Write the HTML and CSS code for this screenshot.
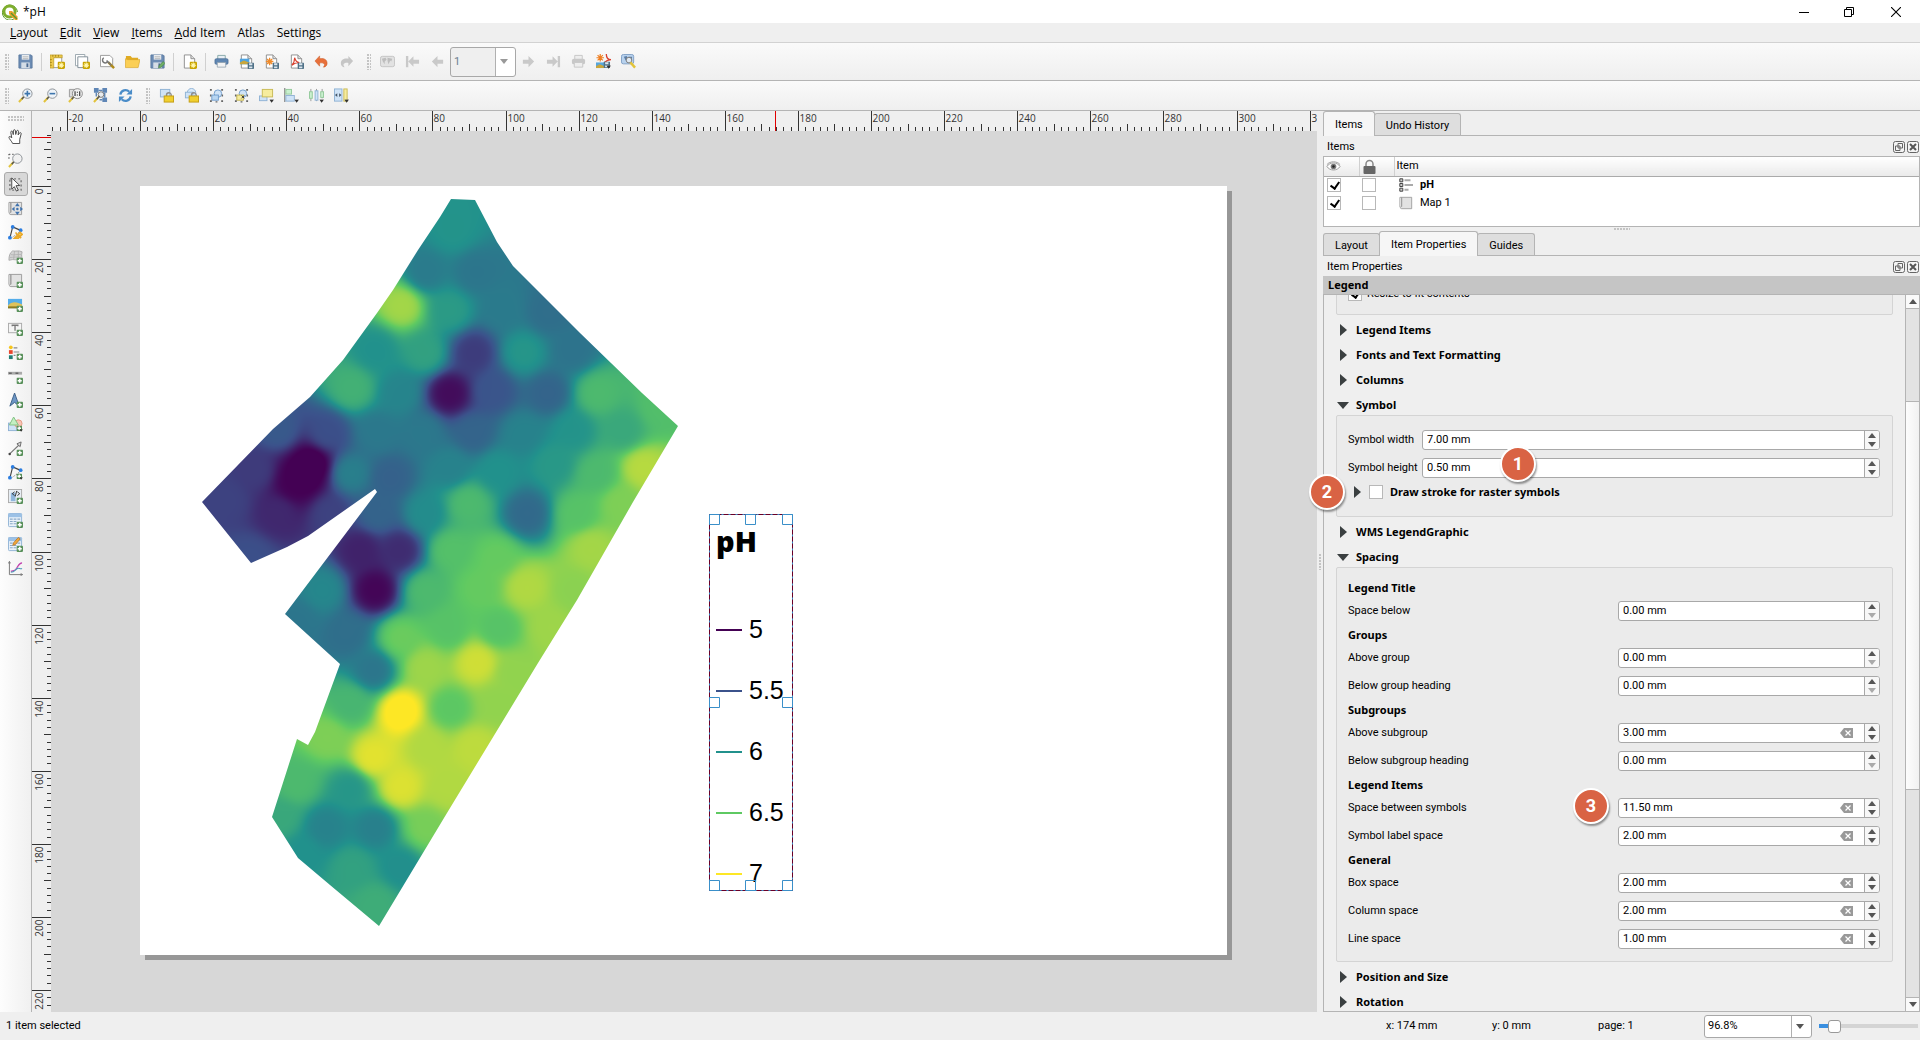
FILE: index.html
```
<!DOCTYPE html>
<html lang="en">
<head>
<meta charset="utf-8">
<title>*pH</title>
<link rel="stylesheet" href="styles.css">
</head>
<body>
<svg class="defs" aria-hidden="true">
  <symbol id="b-new" viewBox="0 0 8 8"><rect width="8" height="8" rx="1.5" fill="#c9a400"/><path d="M4 1v6M1 4h6M2 2l4 4M6 2l-4 4" stroke="#fff6b0" stroke-width="1.1"/></symbol>
  <symbol id="b-add" viewBox="0 0 8 8"><rect width="8" height="8" rx="1.5" fill="#58905a"/><path d="M4 1.5v5M1.500 4h5" stroke="#fff" stroke-width="2"/></symbol>
  <symbol id="b-save" viewBox="0 0 8 8"><rect width="8" height="8" rx="1" fill="#4f7187"/><path d="M2 1h4v2.500H2zM2 5h4v2H2z" fill="#dce6ee"/></symbol>
  <symbol id="arr" viewBox="0 0 6 4"><path d="M0 0h6L3 4z" fill="#333"/></symbol>
  <symbol id="i-save" viewBox="0 0 16 16"><path d="M1 1h13l1 1v13H1z" fill="#6c8cb4" stroke="#5b7aa0"/><rect x="4" y="1" width="8" height="5" fill="#e9ecef"/><path d="M5 3h6M5 5h6" stroke="#aaa" stroke-width=".8"/><rect x="3.500" y="9" width="9" height="6" fill="#d5dde6"/><rect x="9" y="10" width="2" height="4" fill="#4b6a92"/></symbol>
  <symbol id="page" viewBox="0 0 16 16"><path d="M2.500 1h7l4 4v10h-11z" fill="#fff" stroke="#8e8e8e"/><path d="M9.500 1v4h4" fill="#ddd" stroke="#8e8e8e"/></symbol>
  <symbol id="i-new" viewBox="0 0 16 16"><path d="M2.500 3.500h10v11h-10z" fill="#fff" stroke="#999"/><path d="M0 1h13v3H4v11H0z" fill="#ecc94b" stroke="#b99722" stroke-width=".7"/><path d="M3 1v2M6 1v2M9 1v2M0 6h2M0 9h2M0 12h2" stroke="#9a7b12" stroke-width=".8"/><use href="#b-new" x="8" y="8" width="8" height="8"/></symbol>
  <symbol id="i-dup" viewBox="0 0 16 16"><path d="M.5.5h10v12H.5z" fill="#fff" stroke="#98a4ac"/><path d="M3 3h10.500v11.500H3z" fill="#fff" stroke="#7f8c95"/><use href="#b-new" x="8" y="8" width="8" height="8"/></symbol>
  <symbol id="i-mgr" viewBox="0 0 16 16"><path d="M.5 1.500h10l3 3v9H.5z" fill="#fff" stroke="#9a9a9a"/><path d="M4 4a3 3 0 1 0 4.500 3.500" fill="none" stroke="#777" stroke-width="1.600"/><path d="M9 9l6 6" stroke="#b08b1a" stroke-width="2.600"/><path d="M7 7l5 5" stroke="#777" stroke-width="1.500"/></symbol>
  <symbol id="i-open" viewBox="0 0 16 16"><path d="M1 2h5l1.500 2H14v3H1z" fill="#e0ab22"/><path d="M3 6h13l-2 8.500H.5V5z" fill="#fbcf55" stroke="#d9a526" stroke-width=".7"/></symbol>
  <symbol id="i-saveas" viewBox="0 0 16 16"><use href="#i-save"/><path d="M9 15l1-3 4-4 2 2-4 4z" fill="#6fae66" stroke="#3f7b3a" stroke-width=".6"/></symbol>
  <symbol id="i-addpage" viewBox="0 0 16 16"><use href="#page"/><use href="#b-new" x="8" y="8" width="8" height="8"/></symbol>
  <symbol id="i-print" viewBox="0 0 16 16"><path d="M4 1.500h8V6H4z" fill="#e8eef4" stroke="#8aa"/><rect x="1" y="5" width="14" height="6" rx="1.500" fill="#5f86b2" stroke="#44688f" stroke-width=".7"/><path d="M3.500 9h9v5h-9z" fill="#f3f3f3" stroke="#8a99a8" stroke-width=".8"/></symbol>
  <symbol id="i-img" viewBox="0 0 16 16"><use href="#page"/><path d="M1 5h10v6H1z" fill="#4fa4e0"/><path d="M1 9l4-2 6 2v2H1z" fill="#c9a63b"/><use href="#b-save" x="9" y="9" width="7" height="7"/></symbol>
  <symbol id="i-svg" viewBox="0 0 16 16"><use href="#page"/><path d="M6 4v8M2 8h8M3.300 5.300l5.400 5.400M8.700 5.300l-5.400 5.400" stroke="#ef8b2c" stroke-width="1.400"/><use href="#b-save" x="9" y="9" width="7" height="7"/></symbol>
  <symbol id="i-pdf" viewBox="0 0 16 16"><use href="#page"/><path d="M6 4c1 4 3 5 5 5-4 0-6 1-8 3 2-2 3-4 3-8z" fill="none" stroke="#d9412f" stroke-width="1.200"/><use href="#b-save" x="9" y="9" width="7" height="7"/></symbol>
  <symbol id="i-undo" viewBox="0 0 16 16"><path d="M6 2v3c6-1 8 2 8 5 0 2-1.500 4-4 4 2-2 2-5-4-4.500V13L1 7.500z" fill="#e8703a" stroke="#c85420" stroke-width=".5"/></symbol>
  <symbol id="i-redo" viewBox="0 0 16 16"><path d="M10 2v3c-6-1-8 2-8 5 0 2 1.500 4 4 4-2-2-2-5 4-4.500V13l5-5.500z" fill="#c6c6c6"/></symbol>
  <symbol id="i-atlas" viewBox="0 0 16 16"><rect x=".5" y="2.500" width="15" height="11" rx="2" fill="#e2e2e2" stroke="#c4c4c4"/><path d="M2 5l4-1 1 2-2 2v3L3 8zM8 4l5 1-1 3-1-1-2 4-1-4z" fill="#bdbdbd"/></symbol>
  <symbol id="i-first" viewBox="0 0 16 16"><path d="M1 2h2.500v12H1zM3.500 8L9 2.500V6h6v4.500H9v3z" fill="#c9c9c9"/></symbol>
  <symbol id="i-prev" viewBox="0 0 16 16"><path d="M2 8l6-6v4h6v4.500H8V14z" fill="#c9c9c9"/></symbol>
  <symbol id="i-next" viewBox="0 0 16 16"><path d="M14 8L8 2v4H2v4.500h6V14z" fill="#c9c9c9"/></symbol>
  <symbol id="i-last" viewBox="0 0 16 16"><path d="M12.500 2H15v12h-2.500zM12.500 8L7 2.500V6H1v4.500h6v3z" fill="#c9c9c9"/></symbol>
  <symbol id="i-printoff" viewBox="0 0 16 16"><path d="M4 1.500h8V6H4z" fill="#eee" stroke="#c6c6c6"/><rect x="1" y="5" width="14" height="6" rx="2" fill="#c8c8c8"/><path d="M3.500 9h9v5h-9z" fill="#eee" stroke="#c6c6c6"/></symbol>
  <symbol id="i-export" viewBox="0 0 16 16"><path d="M4.500 0v8M.5 4h8M1.700 1.200l5.600 5.600M7.300 1.200L1.700 6.800" stroke="#ef7f22" stroke-width="1.300"/><path d="M11 0c0 4 2 6 5 6-4 0-5 1-7 3" fill="none" stroke="#d9412f" stroke-width="1.400"/><path d="M0 9h9v6H0z" fill="#57a6dc"/><path d="M0 13l4-2 5 2v2H0z" fill="#c9a63b"/><use href="#b-save" x="8" y="8" width="7" height="7"/><use href="#arr" x="11" y="12" width="5" height="4"/></symbol>
  <symbol id="i-aset" viewBox="0 0 16 16"><rect x=".5" y=".5" width="13" height="10" rx="2" fill="#b8d2ee" stroke="#7f9fc4"/><path d="M3 3l3-1 1 2-2 3zM8 3h4l-1 4z" fill="#5c7ea6"/><circle cx="8.500" cy="6.500" r="3" fill="#dfe9f3" stroke="#777"/><path d="M10 9l5 5.500" stroke="#e3c43a" stroke-width="2.600"/></symbol>
  <symbol id="mag" viewBox="0 0 16 16"><path d="M6 9.500L1 15" stroke="#e2c33c" stroke-width="2.200"/><path d="M7 8.500L4 12" stroke="#555" stroke-width="1.500"/></symbol>
  <symbol id="i-zin" viewBox="0 0 16 16"><use href="#mag"/><circle cx="10" cy="6" r="5" fill="#eef3f8" stroke="#8a8f94"/><path d="M10 3v6M7 6h6" stroke="#3d75ad" stroke-width="1.700"/></symbol>
  <symbol id="i-zout" viewBox="0 0 16 16"><use href="#mag"/><circle cx="10" cy="6" r="5" fill="#eef3f8" stroke="#8a8f94"/><path d="M7 6h6" stroke="#3d75ad" stroke-width="1.700"/></symbol>
  <symbol id="i-z1" viewBox="0 0 16 16"><path d="M1.500 1.500h7v8h-7z" fill="#ddd" stroke="#999"/><use href="#mag"/><circle cx="10" cy="6" r="5.300" fill="#f2f2f2" stroke="#888"/><path d="M7.500 3.500v5M12.500 3.500v5M10 4v1M10 7v1" stroke="#333" stroke-width="1.200"/></symbol>
  <symbol id="i-zfull" viewBox="0 0 16 16"><path d="M1 0h5v5H1zM10 0h5v5h-5zM10 10h5v5h-5z" fill="#5f86b6"/><path d="M3.500 5v4M6 2.500h4M12.500 5v5M7 12.500h3" stroke="#5f86b6" stroke-width="1.500"/><circle cx="8.500" cy="7" r="3" fill="#e8ecf0" stroke="#777"/><use href="#mag"/></symbol>
  <symbol id="i-ref" viewBox="0 0 16 16"><path d="M2.500 7A5.500 5.500 0 0 1 12 4M13.500 9A5.500 5.500 0 0 1 4 12" fill="none" stroke="#4a8cc8" stroke-width="2.400"/><path d="M15 1v6H9zM1 15V9h6z" fill="#4a8cc8"/></symbol>
  <symbol id="lockb" viewBox="0 0 16 16"><path d="M8 9V7.500a2.500 2.500 0 0 1 5 0V9" fill="none" stroke="#8d8d8d" stroke-width="1.500"/><rect x="5.500" y="8.500" width="10" height="6.500" fill="#f0cf2e" stroke="#c39c14"/></symbol>
  <symbol id="i-lock" viewBox="0 0 16 16"><rect x="1.500" y="1.500" width="10" height="8" fill="#cfe3f7" stroke="#8fb2d4"/><use href="#lockb"/></symbol>
  <symbol id="i-unlock" viewBox="0 0 16 16"><circle cx="8" cy="5" r="4.500" fill="#d9eafa" stroke="#8fb2d4"/><rect x="1.500" y="4.500" width="8" height="6" fill="#cfe3f7" stroke="#8fb2d4"/><use href="#lockb"/></symbol>
  <symbol id="dots" viewBox="0 0 16 16"><path d="M1 1h2v2H1zM13 1h2v2h-2zM1 13h2v2H1zM13 13h2v2h-2zM1 7h1.500v2H1zM13.500 7H15v2h-1.500zM7 14h2v1.500H7z" fill="#666"/></symbol>
  <symbol id="i-grp" viewBox="0 0 16 16"><circle cx="9.500" cy="6" r="4" fill="#cfe3f7" stroke="#6f9ccb"/><rect x="3" y="7.500" width="7" height="5.500" fill="#b8d6f2" stroke="#6f9ccb"/><use href="#dots"/></symbol>
  <symbol id="i-ungrp" viewBox="0 0 16 16"><circle cx="9.500" cy="6" r="4" fill="#cfe3f7" stroke="#6f9ccb"/><rect x="3" y="7.500" width="7" height="5.500" fill="#f6ec9e" stroke="#c0b04a"/><path d="M8 8l3 3M11 8l-3 3" stroke="#333"/><use href="#dots"/></symbol>
  <symbol id="i-raise" viewBox="0 0 16 16"><rect x=".5" y="8.500" width="8" height="5" fill="#cfe3f7" stroke="#8fb2d4"/><rect x="3.500" y="1.500" width="11" height="8" fill="#f6ec9e" stroke="#c9ba55"/><use href="#arr" x="11" y="12" width="5" height="4"/></symbol>
  <symbol id="i-align" viewBox="0 0 16 16"><path d="M.8 0v15" stroke="#888" stroke-width="1.300"/><rect x="2" y="1.500" width="6" height="5" fill="#c9f0cf" stroke="#93c99b"/><rect x="2" y="8" width="9" height="6" fill="#cfe3f7" stroke="#8fb2d4"/><use href="#arr" x="11" y="12" width="5" height="4"/></symbol>
  <symbol id="i-dist" viewBox="0 0 16 16"><path d="M2 1v13M8 1v13M14 1v10" stroke="#999"/><rect x=".5" y="4" width="3" height="7" fill="#c9f0cf" stroke="#93c99b"/><rect x="6.500" y="3" width="3" height="10" fill="#cfe3f7" stroke="#8fb2d4"/><rect x="12.500" y="4" width="3" height="6" fill="#c9f0cf" stroke="#93c99b"/><use href="#arr" x="11" y="12" width="5" height="4"/></symbol>
  <symbol id="i-size" viewBox="0 0 16 16"><rect x=".5" y="1" width="8" height="13" fill="#cfe3f7" stroke="#8fb2d4"/><path d="M3.500 5.500v4L1 7.500zM5.500 5.500v4L8 7.500z" fill="#456"/><rect x="10.500" y="1" width="3.500" height="13" fill="#f6ec9e" stroke="#c9ba55"/><use href="#arr" x="11" y="12" width="5" height="4"/></symbol>
  <symbol id="i-hand" viewBox="0 0 16 16"><path d="M5 15.500C4 13 1 10.500 1 8.800 1 7.500 3 8 4 9.500L3 3.500C2.800 2 4.600 1.800 5 3.200L5.600 6 5.800 1.800C5.900.4 7.700.4 7.900 1.800L8.200 5.800 9.300 2.200c.4-1.300 2-.9 1.900.5L10.800 6.300l1.400-2c.9-1 2.200-.3 1.800 1L12.500 11v4.500z" fill="#fff" stroke="#444"/></symbol>
  <symbol id="i-zoom" viewBox="0 0 16 16"><path d="M1 1.500h5M1 1v6" stroke="#666" stroke-width="1.300" stroke-dasharray="1.500 2"/><use href="#mag"/><circle cx="10" cy="6" r="5" fill="#f1f1f1" stroke="#8a8f94"/></symbol>
  <symbol id="i-sel" viewBox="0 0 16 16"><path d="M2 2h12v12H2z" fill="none" stroke="#777" stroke-width="1.500" stroke-dasharray="2 2.500"/><path d="M4 1l8.500 8-4 .3L11 14l-2 1-2.300-4.700L4 13z" fill="#fff" stroke="#444"/></symbol>
  <symbol id="scroll" viewBox="0 0 16 16"><path d="M1 1.500h13.500v13H3C1 14.500 1 12 3 12V1.500" fill="#e2e2e2" stroke="#9b9b9b"/><path d="M1 1.500v11M3 1.500V12" stroke="#9b9b9b"/></symbol>
  <symbol id="i-move" viewBox="0 0 16 16"><use href="#scroll"/><path d="M10 2l2.500 3.500h-5zM10 15l2.500-3.500h-5zM4 8.500L7 6v5zM16 8.500L13 6v5z" fill="#3f72ad"/><circle cx="10" cy="8.500" r="1.300" fill="#3f72ad"/></symbol>
  <symbol id="nodes" viewBox="0 0 16 16"><path d="M2 14L5 2l9 4" fill="none" stroke="#444" stroke-width="1.200"/><path d="M3.500 14L13 7" stroke="#777" stroke-dasharray="1.500 1.500"/><circle cx="2" cy="13.500" r="2" fill="#2b7de0"/><circle cx="5" cy="2" r="2" fill="#2b7de0"/><circle cx="13.500" cy="5.500" r="2" fill="#2b7de0"/></symbol>
  <symbol id="i-edit" viewBox="0 0 16 16"><use href="#nodes"/><path d="M7 14l6-6 2 2-4 4zM8 8l6 6" stroke="#eaa92a" stroke-width="1.800" fill="#f7d560"/></symbol>
  <symbol id="i-map3d" viewBox="0 0 16 16"><path d="M1 12c0-5 1-8 4-10 3 1 6-1 10 1-1 4 0 6 0 8-4 2-9-1-14 1z" fill="#d3d3d3" stroke="#aaa"/><path d="M3 6c4 1 7-1 11 0M2 9c4 0 8-1 12 0M7 2l-1 9M11 2v9" stroke="#aaa" fill="none" stroke-width=".7"/><use href="#b-add" x="9" y="9" width="7" height="7"/></symbol>
  <symbol id="i-map" viewBox="0 0 16 16"><use href="#scroll"/><use href="#b-add" x="9" y="9" width="7" height="7"/></symbol>
  <symbol id="i-pic" viewBox="0 0 16 16"><path d="M0 2h15v10H0z" fill="#54adea"/><path d="M0 9c4-5 10-4 15-1v4H0z" fill="#dfc25a"/><path d="M0 10h15v2H0z" fill="#8a7a24"/><use href="#b-add" x="9" y="9" width="7" height="7"/></symbol>
  <symbol id="i-text" viewBox="0 0 16 16"><rect x=".5" y="2.500" width="14" height="10" fill="#f5f5f5" stroke="#aaa"/><path d="M4.500 5.500v-1h6v1M7.500 4.500v6" fill="none" stroke="#777" stroke-width="1.400"/><use href="#b-add" x="9" y="9" width="7" height="7"/></symbol>
  <symbol id="i-leg" viewBox="0 0 16 16"><circle cx="3" cy="2.500" r="2" fill="#f6c51c"/><rect x="1" y="5.500" width="4" height="4" fill="#e8472c"/><rect x="1" y="11" width="4" height="4" fill="#1d7e74"/><path d="M6 3h4M6 7.500h6M6 11h2" stroke="#888" stroke-width="1.200"/><use href="#b-add" x="9" y="9" width="7" height="7"/></symbol>
  <symbol id="i-bar" viewBox="0 0 16 16"><rect y="3" width="15" height="3" fill="#aaa"/><path d="M1 4.500h3M8 4.500h3" stroke="#666" stroke-width="1.500"/><use href="#b-add" x="9" y="9" width="7" height="7"/></symbol>
  <symbol id="i-north" viewBox="0 0 16 16"><path d="M7 0l5 14-5-4-5 4z" fill="#6d96c4" stroke="#3c5f88"/><use href="#b-add" x="9" y="9" width="7" height="7"/></symbol>
  <symbol id="i-shape" viewBox="0 0 16 16"><rect x=".5" y="6.500" width="9" height="8" fill="#cfe3f7" stroke="#8fb2d4"/><circle cx="11" cy="7" r="4" fill="#f8c5b5" stroke="#e39a84"/><path d="M6 0l5 8.500H1.500z" fill="#c4efc2" stroke="#7fbf80"/><use href="#b-add" x="9" y="9" width="6" height="6"/><use href="#arr" x="12" y="13" width="4" height="3"/></symbol>
  <symbol id="i-arrow" viewBox="0 0 16 16"><path d="M1.500 14L12 4" stroke="#777" stroke-width="1.200"/><circle cx="1.800" cy="13.800" r="1.300" fill="#444"/><path d="M14 1l-1 5-3.500-3z" fill="#ddd" stroke="#666"/><use href="#b-add" x="9" y="9" width="7" height="7"/></symbol>
  <symbol id="i-node" viewBox="0 0 16 16"><use href="#nodes"/><use href="#b-add" x="9" y="9" width="6" height="6"/><use href="#arr" x="12" y="13" width="4" height="3"/></symbol>
  <symbol id="i-html" viewBox="0 0 16 16"><rect x=".5" y=".5" width="14" height="14" fill="#e8eef4" stroke="#aaa"/><path d="M3 4h5v9H3z" fill="#8fb6dc"/><path d="M7 3L4.500 5 7 7M10 3l2.500 2L10 7M9.300 2L7.700 8" fill="none" stroke="#333"/><use href="#b-add" x="9" y="9" width="7" height="7"/></symbol>
  <symbol id="i-table" viewBox="0 0 16 16"><rect x=".5" y=".5" width="14" height="14" rx="1" fill="#eaf2fa" stroke="#8fb2d4"/><path d="M.5.5h14v4H.5z" fill="#9cc1e6"/><path d="M2 6.500h3M6 6.500h3M10 6.500h3M2 9h3M6 9h3M2 11.500h3M6 11.500h3" stroke="#8aa9c8" stroke-width="1.200"/><use href="#b-add" x="9" y="9" width="7" height="7"/></symbol>
  <symbol id="i-tbl2" viewBox="0 0 16 16"><use href="#i-table"/><path d="M5 9l1-3 5-5.500 2 1.500L8 8z" fill="#f0a63a" stroke="#a8691c" stroke-width=".7"/></symbol>
  <symbol id="i-plot" viewBox="0 0 16 16"><path d="M1.500 0v14.500H16M0 2h3M14 13v3" fill="none" stroke="#777"/><path d="M3 11c3-1 4 0 6-3s3-6 6-6" fill="none" stroke="#c23fae" stroke-width="1.300"/><path d="M3 12c4 0 5-3 7-4s3 1 5 0" fill="none" stroke="#4a9bb8" stroke-width="1.200"/></symbol>
  <symbol id="float" viewBox="0 0 12 12"><rect x=".5" y=".5" width="11" height="11" rx="2" fill="#f4f4f4" stroke="#666"/><path d="M5 2.500h4.500V7H5zM2.500 5H7v4.500H2.500z" fill="#f4f4f4" stroke="#666"/></symbol>
  <symbol id="close" viewBox="0 0 12 12"><rect x=".5" y=".5" width="11" height="11" rx="2" fill="#f4f4f4" stroke="#666"/><path d="M3 3l6 6M9 3l-6 6" stroke="#555" stroke-width="2"/></symbol>
  <symbol id="tri-c" viewBox="0 0 12 12"><path d="M3 0v12l7-6z" fill="#3a3f40"/></symbol>
  <symbol id="tri-o" viewBox="0 0 12 12"><path d="M0 3h12l-6 7z" fill="#3a3f40"/></symbol>
  <symbol id="up" viewBox="0 0 8 5"><path d="M4 0l4 5H0z" fill="currentColor"/></symbol>
  <symbol id="down" viewBox="0 0 8 5"><path d="M4 5l4-5H0z" fill="currentColor"/></symbol>
  <symbol id="clear" viewBox="0 0 13 10"><path d="M4 0h9v10H4L0 5z" fill="#999"/><path d="M5.500 2.500l5 5M10.500 2.500l-5 5" stroke="#fff" stroke-width="1.200"/></symbol>
</svg>

<header class="titlebar">
  <svg class="logo" viewBox="0 0 16 16"><path d="M14 13a7.500 7.500 0 1 1 1.400-5" fill="none" stroke="#5a9a30" stroke-width="1"/><circle cx="7.500" cy="7.500" r="5.600" fill="none" stroke="#7fae2e" stroke-width="3"/><path d="M7 7h3l5.500 5.500V16H13L7 10z" fill="#f0a02c"/><path d="M9 9l6 6" stroke="#5a9a30" stroke-width="1.500"/></svg>
  <h1>*pH</h1>
  <div class="winbtns">
    <button aria-label="Minimize"><svg viewBox="0 0 10 10"><path d="M0 5.500h10" stroke="#000"/></svg></button>
    <button aria-label="Restore"><svg viewBox="0 0 10 10"><path d="M.5 2.500h7v7h-7zM2.500 2.500v-2h7v7h-2" fill="none" stroke="#000"/></svg></button>
    <button aria-label="Close"><svg viewBox="0 0 10 10"><path d="M0 0l10 10M10 0L0 10" stroke="#000" stroke-width="1.100"/></svg></button>
  </div>
</header>
<nav class="menubar">
  <button><u>L</u>ayout</button><button><u>E</u>dit</button><button><u>V</u>iew</button><button><u>I</u>tems</button><button><u>A</u>dd Item</button><button>Atlas</button><button>Settings</button>
</nav>
<div class="toolbar tall">
  <i class="grip"></i>
  <button aria-label="Save"><svg><use href="#i-save"/></svg></button><i class="sep"></i>
  <button aria-label="New layout"><svg><use href="#i-new"/></svg></button>
  <button aria-label="Duplicate layout"><svg><use href="#i-dup"/></svg></button>
  <button aria-label="Layout manager"><svg><use href="#i-mgr"/></svg></button>
  <button aria-label="Open template"><svg><use href="#i-open"/></svg></button>
  <button aria-label="Save template"><svg><use href="#i-saveas"/></svg></button><i class="sep"></i>
  <button aria-label="Add pages"><svg><use href="#i-addpage"/></svg></button><i class="sep"></i>
  <button aria-label="Print"><svg><use href="#i-print"/></svg></button>
  <button aria-label="Export image"><svg><use href="#i-img"/></svg></button>
  <button aria-label="Export SVG"><svg><use href="#i-svg"/></svg></button>
  <button aria-label="Export PDF"><svg><use href="#i-pdf"/></svg></button>
  <button aria-label="Undo"><svg><use href="#i-undo"/></svg></button>
  <button aria-label="Redo" disabled><svg><use href="#i-redo"/></svg></button>
  <i class="grip mid"></i>
  <button aria-label="Preview atlas" disabled><svg><use href="#i-atlas"/></svg></button>
  <button aria-label="First feature" disabled><svg><use href="#i-first"/></svg></button>
  <button aria-label="Previous feature" disabled><svg><use href="#i-prev"/></svg></button>
  <span class="combo atlas"><select aria-label="Atlas page" disabled><option>1</option></select><svg><use href="#down"/></svg></span>
  <button aria-label="Next feature" disabled><svg><use href="#i-next"/></svg></button>
  <button aria-label="Last feature" disabled><svg><use href="#i-last"/></svg></button>
  <button aria-label="Print atlas" disabled><svg><use href="#i-printoff"/></svg></button>
  <button aria-label="Export atlas"><svg><use href="#i-export"/></svg></button>
  <button aria-label="Atlas settings"><svg><use href="#i-aset"/></svg></button>
</div>
<div class="toolbar">
  <i class="grip"></i>
  <button aria-label="Zoom in"><svg><use href="#i-zin"/></svg></button>
  <button aria-label="Zoom out"><svg><use href="#i-zout"/></svg></button>
  <button aria-label="Zoom 1:1"><svg><use href="#i-z1"/></svg></button>
  <button aria-label="Zoom full"><svg><use href="#i-zfull"/></svg></button>
  <button aria-label="Refresh"><svg><use href="#i-ref"/></svg></button>
  <i class="grip mid"></i>
  <button aria-label="Lock items"><svg><use href="#i-lock"/></svg></button>
  <button aria-label="Unlock items"><svg><use href="#i-unlock"/></svg></button>
  <button aria-label="Group"><svg><use href="#i-grp"/></svg></button>
  <button aria-label="Ungroup"><svg><use href="#i-ungrp"/></svg></button>
  <button aria-label="Raise"><svg><use href="#i-raise"/></svg></button>
  <button aria-label="Align"><svg><use href="#i-align"/></svg></button>
  <button aria-label="Distribute"><svg><use href="#i-dist"/></svg></button>
  <button aria-label="Resize"><svg><use href="#i-size"/></svg></button>
</div>

<main class="work">
  <div class="toolbox">
    <i class="grip flat"></i>
    <button aria-label="Pan"><svg><use href="#i-hand"/></svg></button>
    <button aria-label="Zoom"><svg><use href="#i-zoom"/></svg></button>
    <button aria-label="Select item" class="on"><svg><use href="#i-sel"/></svg></button>
    <button aria-label="Move content"><svg><use href="#i-move"/></svg></button>
    <button aria-label="Edit nodes"><svg><use href="#i-edit"/></svg></button>
    <button aria-label="Add 3D map"><svg><use href="#i-map3d"/></svg></button>
    <button aria-label="Add map"><svg><use href="#i-map"/></svg></button>
    <button aria-label="Add picture"><svg><use href="#i-pic"/></svg></button>
    <button aria-label="Add label"><svg><use href="#i-text"/></svg></button>
    <button aria-label="Add legend"><svg><use href="#i-leg"/></svg></button>
    <button aria-label="Add scale bar"><svg><use href="#i-bar"/></svg></button>
    <button aria-label="Add north arrow"><svg><use href="#i-north"/></svg></button>
    <button aria-label="Add shape"><svg><use href="#i-shape"/></svg></button>
    <button aria-label="Add arrow"><svg><use href="#i-arrow"/></svg></button>
    <button aria-label="Add node item"><svg><use href="#i-node"/></svg></button>
    <button aria-label="Add HTML"><svg><use href="#i-html"/></svg></button>
    <button aria-label="Add fixed table"><svg><use href="#i-table"/></svg></button>
    <button aria-label="Add attribute table"><svg><use href="#i-tbl2"/></svg></button>
    <button aria-label="Add elevation profile"><svg><use href="#i-plot"/></svg></button>
  </div>

  <div class="view">
    <svg class="ruler-h" id="ruler-h"></svg>
    <svg class="ruler-v" id="ruler-v"></svg>
    <div class="canvas">
      <div class="paper">
        <canvas class="map" id="map" width="476" height="727"></canvas>
        <div class="legend">
          <h2>pH</h2>
          <ul>
            <li><i style="background:#440154"></i>5</li>
            <li><i style="background:#3b528b"></i>5.5</li>
            <li><i style="background:#21918c"></i>6</li>
            <li><i style="background:#5ec962"></i>6.5</li>
            <li><i style="background:#fde725"></i>7</li>
          </ul>
          <svg class="selection" viewBox="0 0 84 377" fill="none">
            <path d="M.5.500h83v376H.5z" stroke="#3a8fc9"/><path d="M.5.500h83v376H.5z" stroke="#6b0028" stroke-dasharray="5 2"/>
            <path d="M.5.500h10v10H.5zM36.500.500h10v10h-10zM73.500.500h10v10h-10zM.5 183.500h10v10H.5zM73.500 183.500h10v10h-10zM.5 366.500h10v10H.5zM36.500 366.500h10v10h-10zM73.500 366.500h10v10h-10z" stroke="#3a8fc9"/>
          </svg>
        </div>
      </div>
    </div>
  </div>

  <div class="splitter"><i class="grip small"></i></div>

  <aside class="dock">
    <div class="tabs"><button class="on">Items</button><button>Undo History</button></div>
    <div class="dock-title">Items<span><button aria-label="Float"><svg><use href="#float"/></svg></button><button aria-label="Close"><svg><use href="#close"/></svg></button></span></div>
    <div class="items">
      <table>
        <thead><tr>
          <th><svg viewBox="0 0 16 12"><path d="M1 6c3-5 11-5 14 0-3 5-11 5-14 0z" fill="#fff" stroke="#999"/><path d="M1 4c3-4 11-4 14 0" fill="none" stroke="#999"/><circle cx="8" cy="6" r="3" fill="#777"/><circle cx="8" cy="6" r="1.300" fill="#222"/></svg></th>
          <th><svg viewBox="0 0 13 15"><path d="M3 8V5a3.500 3.500 0 0 1 7 0v3" fill="none" stroke="#888" stroke-width="1.500"/><rect x=".5" y="7" width="12" height="8" rx="1" fill="#666"/></svg></th>
          <th>Item</th>
        </tr></thead>
        <tbody>
          <tr><td><input type="checkbox" aria-label="pH visible" checked></td><td><input type="checkbox" aria-label="pH locked"></td>
            <td><span class="item"><svg viewBox="0 0 14 14"><path d="M.8.800h3v3h-3zM.8 5.500h3v3h-3zM.8 10.200h3v3h-3z" fill="#ccc" stroke="#444"/><path d="M5.500 2.300h6M5.500 7H14M5.500 11.700h4" stroke="#aaa" stroke-width="2"/></svg><b>pH</b></span></td></tr>
          <tr><td><input type="checkbox" aria-label="Map 1 visible" checked></td><td><input type="checkbox" aria-label="Map 1 locked"></td>
            <td><span class="item"><svg viewBox="0 0 16 16"><use href="#scroll"/></svg>Map 1</span></td></tr>
        </tbody>
      </table>
    </div>
    <div class="hsplit"><i class="grip flat"></i></div>
    <div class="tabs"><button>Layout</button><button class="on">Item Properties</button><button>Guides</button></div>
    <div class="dock-title">Item Properties<span><button aria-label="Float"><svg><use href="#float"/></svg></button><button aria-label="Close"><svg><use href="#close"/></svg></button></span></div>
    <h2 class="kind">Legend</h2>
    <div class="scroller">
      <div class="props">
        <div class="box first"><label class="check"><input type="checkbox" checked>Resize to fit contents</label></div>
        <button class="section"><svg><use href="#tri-c"/></svg>Legend Items</button>
        <button class="section"><svg><use href="#tri-c"/></svg>Fonts and Text Formatting</button>
        <button class="section"><svg><use href="#tri-c"/></svg>Columns</button>
        <button class="section"><svg><use href="#tri-o"/></svg>Symbol</button>
        <div class="box symbol">
          <div class="row"><label for="sw">Symbol width</label><span class="spin"><input id="sw" value="7.00 mm"><button aria-label="Up"><svg><use href="#up"/></svg></button><button aria-label="Down"><svg><use href="#down"/></svg></button></span></div>
          <div class="row"><label for="sh">Symbol height</label><span class="spin"><input id="sh" value="0.50 mm"><button aria-label="Up"><svg><use href="#up"/></svg></button><button aria-label="Down"><svg><use href="#down"/></svg></button></span></div>
          <div class="stroke"><svg><use href="#tri-c"/></svg><label class="check"><input type="checkbox">Draw stroke for raster symbols</label></div>
        </div>
        <button class="section"><svg><use href="#tri-c"/></svg>WMS LegendGraphic</button>
        <button class="section"><svg><use href="#tri-o"/></svg>Spacing</button>
        <div class="box spacing">
          <h4>Legend Title</h4>
          <div class="row"><label for="s1">Space below</label><span class="spin"><input id="s1" value="0.00 mm"><button aria-label="Up"><svg><use href="#up"/></svg></button><button aria-label="Down" disabled><svg><use href="#down"/></svg></button></span></div>
          <h4>Groups</h4>
          <div class="row"><label for="s2">Above group</label><span class="spin"><input id="s2" value="0.00 mm"><button aria-label="Up"><svg><use href="#up"/></svg></button><button aria-label="Down" disabled><svg><use href="#down"/></svg></button></span></div>
          <div class="row"><label for="s3">Below group heading</label><span class="spin"><input id="s3" value="0.00 mm"><button aria-label="Up"><svg><use href="#up"/></svg></button><button aria-label="Down" disabled><svg><use href="#down"/></svg></button></span></div>
          <h4>Subgroups</h4>
          <div class="row"><label for="s4">Above subgroup</label><span class="spin"><input id="s4" value="3.00 mm"><button class="clr" aria-label="Clear"><svg><use href="#clear"/></svg></button><button aria-label="Up"><svg><use href="#up"/></svg></button><button aria-label="Down"><svg><use href="#down"/></svg></button></span></div>
          <div class="row"><label for="s5">Below subgroup heading</label><span class="spin"><input id="s5" value="0.00 mm"><button aria-label="Up"><svg><use href="#up"/></svg></button><button aria-label="Down" disabled><svg><use href="#down"/></svg></button></span></div>
          <h4>Legend Items</h4>
          <div class="row"><label for="s6">Space between symbols</label><span class="spin"><input id="s6" value="11.50 mm"><button class="clr" aria-label="Clear"><svg><use href="#clear"/></svg></button><button aria-label="Up"><svg><use href="#up"/></svg></button><button aria-label="Down"><svg><use href="#down"/></svg></button></span></div>
          <div class="row"><label for="s7">Symbol label space</label><span class="spin"><input id="s7" value="2.00 mm"><button class="clr" aria-label="Clear"><svg><use href="#clear"/></svg></button><button aria-label="Up"><svg><use href="#up"/></svg></button><button aria-label="Down"><svg><use href="#down"/></svg></button></span></div>
          <h4>General</h4>
          <div class="row"><label for="s8">Box space</label><span class="spin"><input id="s8" value="2.00 mm"><button class="clr" aria-label="Clear"><svg><use href="#clear"/></svg></button><button aria-label="Up"><svg><use href="#up"/></svg></button><button aria-label="Down"><svg><use href="#down"/></svg></button></span></div>
          <div class="row"><label for="s9">Column space</label><span class="spin"><input id="s9" value="2.00 mm"><button class="clr" aria-label="Clear"><svg><use href="#clear"/></svg></button><button aria-label="Up"><svg><use href="#up"/></svg></button><button aria-label="Down"><svg><use href="#down"/></svg></button></span></div>
          <div class="row"><label for="s10">Line space</label><span class="spin"><input id="s10" value="1.00 mm"><button class="clr" aria-label="Clear"><svg><use href="#clear"/></svg></button><button aria-label="Up"><svg><use href="#up"/></svg></button><button aria-label="Down"><svg><use href="#down"/></svg></button></span></div>
        </div>
        <button class="section"><svg><use href="#tri-c"/></svg>Position and Size</button>
        <button class="section"><svg><use href="#tri-c"/></svg>Rotation</button>
      </div>
      <div class="scrollbar">
        <button aria-label="Scroll up"><svg><use href="#up"/></svg></button>
        <div class="track"><div class="thumb"></div></div>
        <button aria-label="Scroll down"><svg><use href="#down"/></svg></button>
      </div>
    </div>
    <span class="step one">1</span>
    <span class="step two">2</span>
    <span class="step three">3</span>
  </aside>
</main>

<footer class="status">
  <span class="msg">1 item selected</span>
  <span class="pos">x: 174 mm</span><span class="pos">y: 0 mm</span><span class="pos">page: 1</span>
  <span class="combo zoom"><select aria-label="Zoom level"><option>96.8%</option></select><svg><use href="#down"/></svg></span>
  <input class="slider" type="range" aria-label="Zoom" min="0" max="100" value="10">
</footer>
<script src="layout.js"></script>
</body>
</html>
```

FILE: styles.css
```
* { box-sizing: border-box; }
body { margin: 0; height: 100vh; display: flex; flex-direction: column; overflow: hidden; background: #efefef; color: #000; font: 11px/14px Roboto, "Noto Sans", sans-serif; }
button, input, select { font: inherit; color: inherit; }
button { border: 0; padding: 0; background: none; display: flex; align-items: center; justify-content: center; }
h1, h2, h4, ul { margin: 0; padding: 0; font: inherit; list-style: none; }
.defs { position: absolute; width: 0; height: 0; }

.titlebar { height: 23px; flex: none; background: #fff; display: flex; align-items: center; padding-left: 2px; gap: 5px; font: 12px/16px "Open Sans", "Noto Sans", sans-serif; }
.logo { width: 16px; height: 16px; }
.winbtns { margin-left: auto; display: flex; }
.winbtns button { width: 45px; height: 20px; }
.winbtns button:last-child { width: 49px; }
.winbtns svg { width: 10px; height: 10px; }

.menubar { height: 20px; flex: none; display: flex; padding-left: 10px; gap: 12px; border-bottom: 1px solid #d2d2d2; font: 12px/18px "Open Sans", "Noto Sans", sans-serif; }

.toolbar { height: 30px; flex: none; display: flex; align-items: center; padding-left: 5px; border-bottom: 1px solid #b4b4b4; background: linear-gradient(#fafafa, #efefef); }
.toolbar.tall { height: 38px; }
.toolbar button { width: 25px; height: 24px; flex: none; }
.toolbar button svg, .toolbox svg { width: 15px; height: 15px; }
.grip { width: 4px; height: 16px; flex: none; margin-right: 4px; background: radial-gradient(circle at 1px 1px, #c4c4c4 1px, transparent 1px) 0 0 / 3px 3px; }
.grip.mid { margin-left: 8px; }
.grip.flat { width: 16px; height: 5px; margin: 0; }
.grip.small { width: 2px; margin: 0; }
.sep { width: 1px; height: 18px; margin: 0 3px; background: #d0d0d0; }

.combo { display: flex; align-items: center; position: relative; border: 1px solid #a8a8a8; border-radius: 3px; background: #fff; }
.combo select { appearance: none; border: 0; background: none; flex: 1; height: 100%; padding: 0 24px 0 3px; opacity: 1; }
.combo svg { position: absolute; right: 7px; width: 8px; height: 5px; color: #555; pointer-events: none; }
.combo::after { content: ""; position: absolute; right: 19px; top: 0; bottom: 0; border-left: 1px solid #b0b0b0; }
.atlas { width: 66px; height: 30px; background: linear-gradient(90deg, #efefef 45px, #fff 45px); color: #6d7f90; }
.atlas svg { color: #999; }

.work { flex: 1; min-height: 0; display: flex; }
.toolbox { width: 32px; flex: none; border-right: 1px solid #b4b4b4; display: flex; flex-direction: column; align-items: center; padding-top: 5px; background: linear-gradient(90deg, #fdfdfd, #f0f0f0); }
.toolbox .grip { margin-bottom: 3px; }
.toolbox button { width: 24px; height: 24px; flex: none; }
.toolbox .on { border: 1px solid #aaa; border-radius: 3px; background: #d8d8d8; }

.view { flex: 1; min-width: 0; display: grid; grid-template: 20px 1fr / 19px 1fr; }
.ruler-h { grid-area: 1 / 1 / 2 / 3; width: 100%; height: 20px; }
.ruler-v { grid-area: 2 / 1; width: 19px; height: 100%; }
.ruler-h, .ruler-v { background: #efefef; overflow: hidden; font: 10px "Open Sans", "Noto Sans", sans-serif; fill: #333; }
.canvas { grid-area: 2 / 2; background: #d7d7d7; position: relative; overflow: hidden; }
.paper { position: absolute; left: 89px; top: 55px; width: 1087px; height: 769px; background: #fff; box-shadow: 5px 5px 0 #979797; }
.map { position: absolute; left: 62px; top: 13px; }
.legend { position: absolute; left: 569px; top: 328px; width: 84px; height: 377px; padding: 8px 7px; }
.legend h2 { font: 900 29px/38px "Noto Sans", "Open Sans", sans-serif; }
.legend ul { padding-top: 39px; font: 25px/61px "Liberation Sans", Arial, sans-serif; }
.legend li { display: flex; align-items: center; gap: 7px; height: 61px; }
.legend i { width: 26px; height: 2px; flex: none; }
.selection { position: absolute; left: 0; top: 0; width: 84px; height: 377px; }

.splitter { width: 6px; flex: none; display: flex; align-items: center; justify-content: center; }
.dock { width: 597px; flex: none; position: relative; display: flex; flex-direction: column; }
.tabs { display: flex; align-items: flex-end; height: 25px; flex: none; border-bottom: 1px solid #b4b4b4; }
.tabs button { height: 22px; padding: 2px 11px 0; border: 1px solid #b4b4b4; border-bottom: 0; border-radius: 3px 3px 0 0; background: #dedede; margin-left: -1px; }
.tabs button:first-child { margin-left: 0; }
.tabs .on { height: 25px; background: #f6f6f6; margin-bottom: -1px; }
.dock-title { height: 20px; flex: none; display: flex; align-items: center; padding: 2px 1px 0 4px; }
.dock-title span { margin-left: auto; display: flex; gap: 2px; }
.dock-title svg { width: 12px; height: 12px; display: block; }
.items { height: 71px; flex: none; border: 1px solid #b4b4b4; background: #fff; }
.items table { width: 100%; border-collapse: collapse; table-layout: fixed; }
.items th { height: 19px; padding: 0 2px; background: linear-gradient(#fff, #eaeaea); border-bottom: 1px solid #aaa; text-align: left; font-weight: 400; width: 35px; border-right: 1px solid #d0d0d0; }
.items th:last-child { width: auto; border-right: 0; }
.items th svg { width: 15px; height: 15px; display: block; }
.items td { height: 18px; padding: 0 3px; }
.item { display: flex; align-items: center; gap: 7px; padding-left: 2px; }
.item svg { width: 14px; height: 14px; }
input[type="checkbox"] { appearance: none; width: 14px; height: 14px; margin: 0; border: 1px solid #b8b8b8; background: #fff; display: block; flex: none; }
input[type="checkbox"]:checked::after { content: ""; display: block; width: 4px; height: 7px; margin: 1px 4px; border: solid #000; border-width: 0 2px 2px 0; transform: rotate(35deg); }
.hsplit { height: 4px; flex: none; display: flex; justify-content: center; align-items: center; }
.hsplit .grip { height: 2px; }
.kind { height: 18px; flex: none; padding-left: 5px; background: #c5c5c5; font: bold 11px/18px "Noto Sans", "Open Sans", sans-serif; }

.scroller { flex: 1; min-height: 0; display: flex; border: 1px solid #b4b4b4; }
.props { flex: 1; min-width: 0; overflow: hidden; padding: 0 12px; }
.box { border: 1px solid #d4d4d4; border-radius: 2px; background: #ebebeb; padding: 13px 12px 13px 11px; display: flex; flex-direction: column; gap: 8px; }
.box.first { margin-top: -22px; }
.check { display: flex; align-items: center; gap: 5px; }
.section { width: 100%; height: 25px; padding: 5px 0 0 1px; justify-content: flex-start; gap: 7px; }
.section, .box h4, .stroke { font: bold 11px/14px "Noto Sans", "Open Sans", sans-serif; }
.section svg, .stroke svg { width: 12px; height: 12px; }
.box h4 { height: 11px; line-height: 11px; }
.row { display: grid; grid-template-columns: 1fr 262px; align-items: center; height: 20px; }
.symbol .row { grid-template-columns: 74px 1fr; }
.symbol { padding-top: 14px; padding-bottom: 19px; }
.spacing { padding-top: 14px; padding-bottom: 12px; }
.stroke { display: flex; align-items: center; gap: 6px; height: 11px; padding-left: 3px; }
.stroke .check { gap: 7px; }
.spin { display: grid; grid-template: 9px 9px / 1fr auto 15px; height: 20px; border: 1px solid #a8a8a8; border-radius: 3px; background: #fff; overflow: hidden; }
.spin input { grid-area: 1 / 1 / 3 / 2; border: 0; padding: 0 4px; background: none; min-width: 0; width: 100%; }
.spin button { grid-column: 3; border-left: 1px solid #a8a8a8; color: #555; background: #f7f7f7; }
.spin button:disabled { color: #aaa; }
.spin button svg { width: 8px; height: 5px; }
.spin .clr { grid-area: 1 / 2 / 3 / 3; border: 0; background: none; margin-right: 11px; }
.spin .clr svg { width: 13px; height: 10px; }

.scrollbar { width: 14px; flex: none; border-left: 1px solid #b4b4b4; display: flex; flex-direction: column; background: #e3e3e3; color: #555; }
.scrollbar button { height: 14px; flex: none; background: #fafafa; border: solid #b4b4b4; border-width: 0 0 1px; }
.scrollbar button:last-child { border-width: 1px 0 0; }
.scrollbar svg { width: 8px; height: 5px; }
.track { flex: 1; display: flex; flex-direction: column; padding-top: 92px; }
.thumb { height: 389px; border: solid #b4b4b4; border-width: 1px 0; background: linear-gradient(90deg, #fdfdfd, #f1f1f1); }

.step { position: absolute; width: 36px; height: 36px; border-radius: 50%; border: 2px solid #fff; background: #d96344; color: #fff; box-shadow: 1px 2px 2px #0006; font: bold 18px/32px Roboto, sans-serif; text-align: center; }
.one { left: 177px; top: 335px; }
.two { left: -14px; top: 363px; }
.three { left: 250px; top: 677px; }

.status { height: 28px; flex: none; display: flex; align-items: center; padding: 0 2px 0 6px; }
.msg { flex: 1; }
.pos { width: 106px; }
.zoom { width: 108px; height: 23px; }
.slider { appearance: none; width: 99px; height: 14px; margin: 0 0 0 7px; background: linear-gradient(90deg, #3a8fe0 12px, #d4d4d4 12px) 0 50% / 100% 4px no-repeat; border-radius: 2px; }
.slider::-webkit-slider-thumb { appearance: none; width: 13px; height: 13px; border: 1px solid #999; border-radius: 3px; background: #fff; }
```

FILE: layout.js
```
// Rulers: one unit is a millimetre of paper
const SCALE = 3.655;
function ruler(id, zero, vertical, from, to, size, cursor) {
  let ticks = "", labels = "";
  for (let mm = from; mm <= to; mm += 2) {
    const p = Math.round(zero + mm * SCALE) + 0.5;
    const len = mm % 20 === 0 ? size : mm % 10 === 0 ? 7 : 4;
    ticks += vertical ? `M${size - len} ${p}H${size}` : `M${p} ${size - len}V${size}`;
    if (mm % 20 === 0) {
      labels += vertical
        ? `<text transform="translate(11 ${p + 2}) rotate(-90)" text-anchor="end">${mm}</text>`
        : `<text x="${p + 1}" y="11">${mm}</text>`;
    }
  }
  const mark = vertical ? `M0 ${cursor}H${size}` : `M${cursor} 0V${size}`;
  document.getElementById(id).innerHTML =
    `<path d="${ticks}" stroke="#333"/>${labels}<path d="${mark}" stroke="#e00000"/>`;
}
ruler("ruler-h", 108, false, -24, 330, 20, 743.5);
ruler("ruler-v", 55, true, -14, 224, 19, 6.5);

// Soil samples: x, y, and pH rescaled to 0..1
const samples = [
[251,31,.51],[223,73,.41],[273,73,.39],[200,106,.86],[248,111,.54],[345,114,.36],[300,110,.41],[223,154,.57],[173,151,.5],
[271,153,.18],[321,153,.52],[371,151,.38],[150,189,.64],[198,194,.45],[247,194,.03],[290,191,.26],[346,194,.32],
[395,194,.68],[76,231,.28],[125,233,.24],[175,233,.4],[221,233,.4],[271,234,.32],[321,234,.44],[371,231,.51],
[421,231,.6],[458,208,.7],[53,271,.18],[101,276,-.04],[109,265,-.06],[92,284,0],[148,274,.43],[188,278,.31],[248,268,.44],
[295,271,.5],[351,264,.53],[395,274,.68],[440,268,.89],[25,301,.2],[75,314,.12],[128,314,.2],[175,314,.32],
[223,314,.48],[266,304,.68],[325,314,.34],[375,314,.72],[418,304,.8],[48,358,.24],[158,351,.1],[198,351,.13],
[248,351,.71],[295,358,.76],[388,348,.86],[121,391,.46],[173,391,.01],[223,391,.68],[278,388,.76],[323,388,.88],
[371,391,.82],[95,421,.39],[145,434,.36],[198,438,.77],[246,429,.72],[296,429,.72],[348,428,.85],[171,471,.39],
[223,468,.85],[275,463,.93],[311,474,.83],[148,504,.66],[198,511,1.03],[248,509,.74],[295,504,.83],[125,538,.8],
[170,558,.96],[225,548,.88],[271,548,.9],[95,584,.68],[148,589,.52],[198,588,.95],[245,588,.88],[123,628,.44],
[173,628,.43],[223,628,.79],[78,618,.6],[150,668,.57],[198,668,.49],[173,704,.62],[101,654,.5]];
const outline = [[249,0],[273,1],[295,43],[311,67],[378,134],[440,194],[476,227],[431,303],[375,401],[336,464],
[245,614],[177,727],[128,686],[96,659],[70,618],[95,540],[106,546],[113,533],[138,465],[83,415],[175,293],
[173,290],[106,337],[85,348],[49,364],[0,303],[71,230],[108,198],[141,161],[175,114],[191,91],[216,51],[238,18]];
const ramp = [[68,1,84],[59,82,139],[33,145,140],[94,201,98],[253,231,37]];

// Inverse-distance interpolation over nearby samples, coloured with the five-class ramp
const REACH = 110;
const ctx = document.getElementById("map").getContext("2d");
const W = 476, H = 727, field = ctx.createImageData(W, H);
for (let y = 0; y < H; y++) for (let x = 0; x < W; x++) {
  let sum = 0, weight = 0;
  for (const [sx, sy, v] of samples) {
    const d = Math.hypot(x - sx, y - sy);
    if (d > REACH) continue;
    const w = (1 - d / REACH) ** 2 / (d ** 3 + 400);
    sum += w * v; weight += w;
  }
  if (!weight) continue;
  const t = Math.min(0.9999, Math.max(0, sum / weight)) * 4, i = Math.floor(t), f = t - i;
  const o = (y * W + x) * 4;
  for (let c = 0; c < 3; c++) field.data[o + c] = ramp[i][c] + (ramp[i + 1][c] - ramp[i][c]) * f;
  field.data[o + 3] = 255;
}
ctx.putImageData(field, 0, 0);
ctx.globalCompositeOperation = "destination-in";
ctx.beginPath();
outline.forEach(([x, y]) => ctx.lineTo(x, y));
ctx.closePath();
ctx.fill();
```
